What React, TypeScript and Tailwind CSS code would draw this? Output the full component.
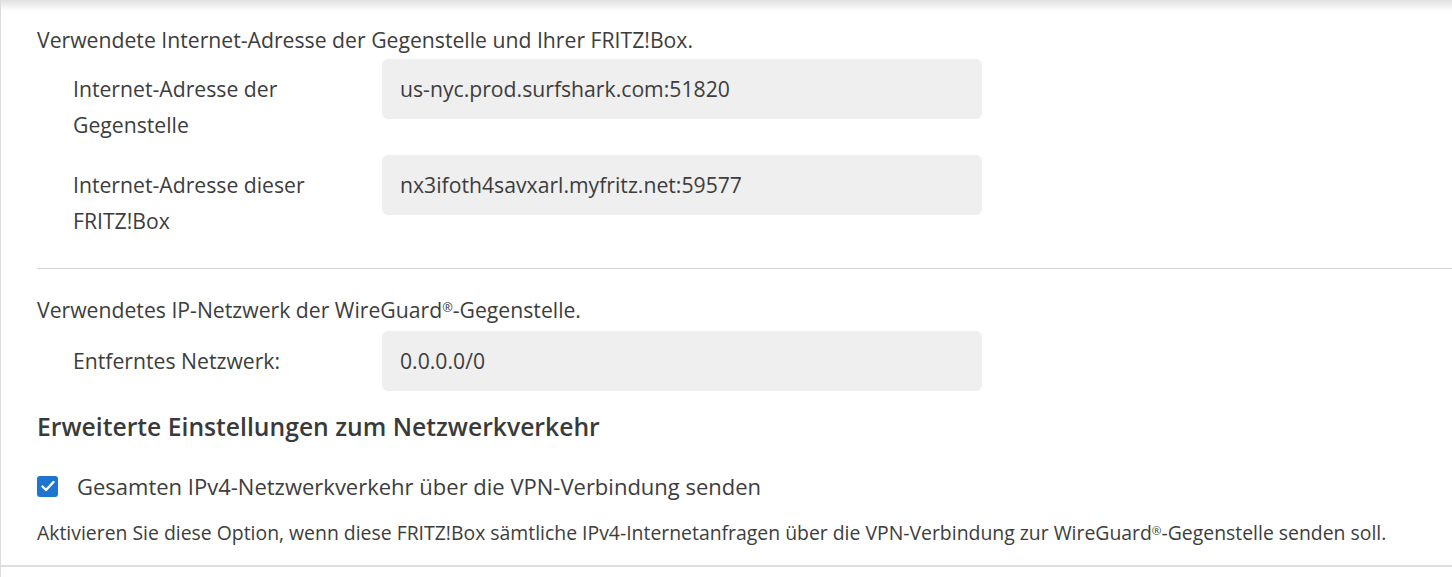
import React from 'react'

const FONT = "font-['Open_Sans','Liberation_Sans',sans-serif]"

function Reg() {
  return <span className="relative -top-[0.45em] text-[0.6em] leading-[0]">®</span>
}

function Field({ label, value, first }: { label: string; value: string; first?: boolean }) {
  return (
    <div className={`flex ${first ? 'mt-[1px]' : 'mt-[12px]'}`}>
      <div className="w-[345px] shrink-0 pl-[36px] pr-[36px] pt-[12px] text-[21.2px] leading-[36px] text-[#3d3d3d]">
        {label}
      </div>
      <div className="flex h-[60px] w-[600px] items-center rounded-[6px] bg-[#efefef] px-[18px] text-[21.2px] text-[#3d3d3d]">
        {value}
      </div>
    </div>
  )
}

function Checkbox({ checked }: { checked: boolean }) {
  if (!checked) {
    return <span className="block h-[21px] w-[21px] shrink-0 rounded-[3px] border-2 border-[#bdbdbd] bg-white" />
  }
  return (
    <span className="flex h-[21px] w-[21px] shrink-0 items-center justify-center rounded-[3px] bg-[#1d75cf]">
      <svg width="16" height="16" viewBox="0 0 16 16" fill="none">
        <path d="M2.5 8.5l3.5 3.5 7.5-8" stroke="white" strokeWidth="2.4" strokeLinecap="round" strokeLinejoin="round" />
      </svg>
    </span>
  )
}

export default function App() {
  return (
    <div className={`relative h-[577px] w-[1452px] overflow-hidden border-l border-[#dcdcdc] bg-white ${FONT}`}>
      <div className="pointer-events-none absolute left-0 right-0 top-0 h-[11px] bg-gradient-to-b from-[#e0e0e0] to-white" />

      <div className="pl-[36px] pt-[22px]">
        <p className="text-[21.2px] leading-[36px] text-[#3d3d3d]">
          Verwendete Internet-Adresse der Gegenstelle und Ihrer FRITZ!Box.
        </p>
        <Field first label="Internet-Adresse der Gegenstelle" value="us-nyc.prod.surfshark.com:51820" />
        <Field label="Internet-Adresse dieser FRITZ!Box" value="nx3ifoth4savxarl.myfritz.net:59577" />

        <div className="mt-[29px] h-[1px] bg-[#d2d2d2]" />

        <p className="mt-[23px] h-[36px] text-[21.2px] leading-[36px] text-[#3d3d3d]">
          Verwendetes IP-Netzwerk der WireGuard<Reg />-Gegenstelle.
        </p>
        <div className="mt-[3px] flex">
          <div className="w-[345px] shrink-0 pl-[36px] pt-[12px] text-[21.2px] leading-[36px] text-[#3d3d3d]">
            Entferntes Netzwerk:
          </div>
          <div className="flex h-[60px] w-[600px] items-center rounded-[6px] bg-[#efefef] px-[18px] text-[21.2px] text-[#3d3d3d]">
            0.0.0.0/0
          </div>
        </div>

        <h2 className="mt-[18px] text-[24.7px] font-semibold leading-[36px] text-[#3a3a3a]">
          Erweiterte Einstellungen zum Netzwerkverkehr
        </h2>

        <label className="mt-[23px] flex items-center gap-[19px] text-[22px] leading-[36px] text-[#3d3d3d]">
          <Checkbox checked />
          <span>Gesamten IPv4-Netzwerkverkehr über die VPN-Verbindung senden</span>
        </label>

        <p className="mt-[14px] h-[30px] text-[19.4px] leading-[30px] text-[#3d3d3d]">
          Aktivieren Sie diese Option, wenn diese FRITZ!Box sämtliche IPv4-Internetanfragen über die VPN-Verbindung zur WireGuard<Reg />-Gegenstelle senden soll.
        </p>
      </div>

      <div className="mt-[17px] border-t-2 border-[#dedede]">
        <div className="flex items-center gap-[20px] pl-[36px] pt-[2px] text-[21px] leading-[36px] text-[#3d3d3d] opacity-20">
          <Checkbox checked={false} />
          <span>NetBIOS über diese Verbindung senden</span>
        </div>
      </div>
    </div>
  )
}
